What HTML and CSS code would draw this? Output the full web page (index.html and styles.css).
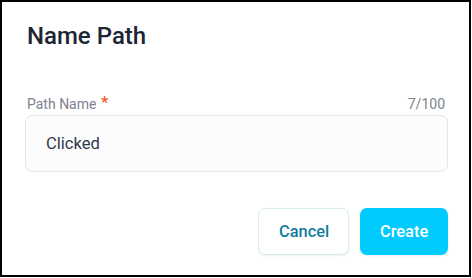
FILE: index.html
```html
<!DOCTYPE html>
<html>
<head>
<meta charset="utf-8">
<link rel="stylesheet" href="styles.css">
</head>
<body>
<div class="dialog">
  <h1 class="title">Name Path</h1>
  <div class="field">
    <div class="field-head">
      <label class="label">Path Name <span class="req">*</span></label>
      <span class="count">7/100</span>
    </div>
    <div class="input">Clicked</div>
  </div>
  <div class="actions">
    <button class="btn btn-cancel">Cancel</button>
    <button class="btn btn-create">Create</button>
  </div>
</div>
</body>
</html>
```
FILE: styles.css
```css
html, body {
  margin: 0;
  padding: 0;
  background: #fff;
}
body {
  font-family: Roboto, "Liberation Sans", sans-serif;
}
.dialog {
  box-sizing: border-box;
  width: 471px;
  height: 277px;
  border: 2px solid #000;
  padding: 18px 23px 0 23px;
  display: flex;
  flex-direction: column;
}
.title {
  margin: 0 0 0 2px;
  font-size: 24px;
  line-height: 32px;
  font-weight: 500;
  color: #1d2433;
}
.field {
  margin-top: 41px;
}
.field-head {
  display: flex;
  justify-content: space-between;
  align-items: baseline;
  height: 22px;
}
.label {
  font-size: 14px;
  line-height: 20px;
  color: #7d838d;
  margin-left: 2px;
}
.req {
  color: #f5501e;
  font-size: 17px;
  margin-left: 1px;
  position: relative;
  top: -1px;
}
.count {
  font-size: 14px;
  line-height: 20px;
  color: #7d838d;
  margin-right: 1px;
}
.input {
  box-sizing: border-box;
  height: 57px;
  width: 423px;
  border: 1px solid #dbeaec;
  border-radius: 7px;
  background: #fcfcfc;
  display: flex;
  align-items: center;
  padding-left: 20px;
  font-size: 16.6px;
  color: #2f3848;
}
.actions {
  display: flex;
  justify-content: flex-end;
  gap: 11px;
  margin-top: 36px;
  margin-right: -2px;
}
.btn {
  box-sizing: border-box;
  height: 47px;
  padding: 0 20px;
  border-radius: 7px;
  font-family: Roboto, "Liberation Sans", sans-serif;
  font-size: 16.4px;
  font-weight: 500;
  cursor: pointer;
}
.btn-cancel {
  width: 91px;
  background: #fff;
  border: 1px solid #d8ebef;
  color: #127c9e;
  box-shadow: 0 1px 2px rgba(0, 80, 100, 0.08);
}
.btn-create {
  width: 88px;
  background: #00cbff;
  border: none;
  color: #fff;
  box-shadow: 0 1px 2px rgba(0, 80, 100, 0.1);
}
```
